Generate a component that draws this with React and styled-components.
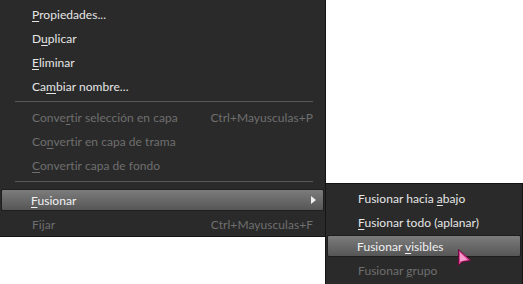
import styled, { createGlobalStyle } from 'styled-components'

const Global = createGlobalStyle`
    html, body { margin:0; padding:0; background:#fff; }
    body { font-family:Lato,"Noto Sans",sans-serif; font-size:12px; }
`;

const Stage = styled.div`
    position:relative;
    width:523px;
    height:284px;
    overflow:hidden;
`;

const Menu = styled.div`
    box-sizing:border-box;
    width:${p => p.width}px;
    background:#2a2a2a;
    border-right:1px solid #141414;
    border-bottom:1px solid #141414;
    padding:${p => p.pad};
    display:flex;
    flex-direction:column;
`;

const SubMenu = styled(Menu)`
    position:absolute;
    left:325px;
    top:183px;
    border:1px solid #141414;
`;

const Item = styled.div`
    box-sizing:border-box;
    height:${p => p.active ? 22 : 24}px;
    margin:${p => p.active ? '1px 1px' : '0 2px'};
    display:flex;
    align-items:center;
    justify-content:space-between;
    padding:0 10px 0 ${p => p.indent - (p.active ? 4 : 3)}px;
    color:${p => p.disabled ? '#6f6f6f' : '#e6e6e6'};
    border-radius:2px;
    white-space:nowrap;
    letter-spacing:0.05px;
    ${p => p.active && `
        background:linear-gradient(#7c7c7c, #565656);
        border:1px solid #1e1e1e;
        color:#f2f2f2;
    `}
    u { text-decoration:underline; text-underline-offset:2px; }
`;

const Shortcut = styled.span`
    color:#6f6f6f;
`;

const Arrow = styled.span`
    width:0;
    height:0;
    border-top:4px solid transparent;
    border-bottom:4px solid transparent;
    border-left:5px solid #f0f0f0;
    margin-right:-3px;
`;

const Separator = styled.div`
    height:1px;
    margin:${p => p.m};
    margin-left:15px;
    margin-right:12px;
    background:#5a5a5a;
`;

const Cursor = styled.svg`
    position:absolute;
    left:457px;
    top:248px;
`;

const L = ({ t, u }) => {
    const i = u;
    return <>{t.slice(0, i)}<u>{t[i]}</u>{t.slice(i + 1)}</>;
};

const App = () => {
    return (
        <>
            <Global />
            <Stage>
                <Menu width={326} pad="2px 0 0 0">
                    <Item indent={33}><span><L t="Propiedades..." u={0} /></span></Item>
                    <Item indent={33}><span><L t="Duplicar" u={1} /></span></Item>
                    <Item indent={33}><span><L t="Eliminar" u={0} /></span></Item>
                    <Item indent={33}><span><L t="Cambiar nombre..." u={2} /></span></Item>
                    <Separator m="3px 0 3px" />
                    <Item indent={33} disabled><span><L t="Convertir selección en capa" u={5} /></span><Shortcut>Ctrl+Mayusculas+P</Shortcut></Item>
                    <Item indent={33} disabled><span><L t="Convertir en capa de trama" u={2} /></span></Item>
                    <Item indent={33} disabled><span><L t="Convertir capa de fondo" u={0} /></span></Item>
                    <Separator m="4px 0 6px" />
                    <Item indent={33} active><span><L t="Fusionar" u={0} /></span><Arrow /></Item>
                    <Item indent={33} disabled><span>Fijar</span><Shortcut>Ctrl+Mayusculas+F</Shortcut></Item>
                </Menu>
                <SubMenu width={198} pad="2px 0 2px 0">
                    <Item indent={33}><span><L t="Fusionar hacia abajo" u={15} /></span></Item>
                    <Item indent={33}><span><L t="Fusionar todo (aplanar)" u={0} /></span></Item>
                    <Item indent={33} active><span><L t="Fusionar visibles" u={9} /></span></Item>
                    <Item indent={33} disabled><span><L t="Fusionar grupo" u={9} /></span></Item>
                </SubMenu>
                <Cursor width="16" height="20" viewBox="0 0 16 20">
                    <path d="M1.5 1.5 L1.5 17.5 L5 14 L14 12.5 Z" fill="#d8408e" stroke="#6a0c3e" strokeWidth="1" strokeLinejoin="round" />
                    <path d="M3 4.5 L3 13.5 L10.5 11.8 Z" fill="#f59ccb" />
                </Cursor>
            </Stage>
        </>
    );
}

export default App;
